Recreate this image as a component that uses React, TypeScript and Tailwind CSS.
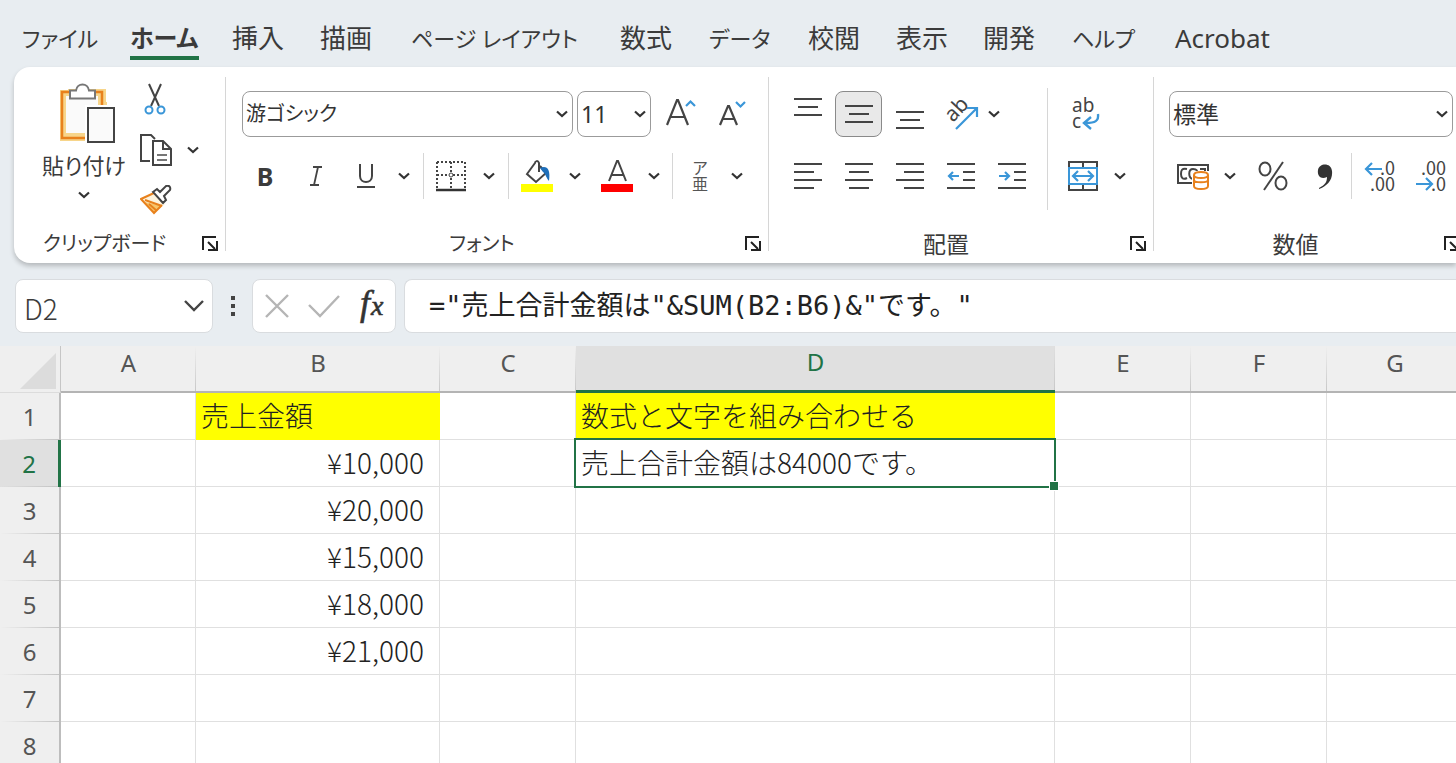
import { useState } from 'react'
import type { ReactNode } from 'react'
import clsx from 'clsx'

const UI_FONT = "font-['Noto_Sans','Noto_Sans_CJK_JP',sans-serif]"
const CELL_FONT = "font-['Noto_Sans_CJK_JP',sans-serif]"
const INK = '#444444'
const BLUE = '#3a96d8'
const ORANGE = '#e8811c'

const TABS = [
  { label: 'ファイル', width: 'w-[108px]', size: 'text-[22px]' },
  { label: 'ホーム', width: 'w-[102px]', size: 'text-[24px]' },
  { label: '挿入', width: 'w-[88px]', size: 'text-[26px]' },
  { label: '描画', width: 'w-[91px]', size: 'text-[26px]' },
  { label: 'ページ レイアウト', width: 'w-[209px]', size: 'text-[22px]' },
  { label: '数式', width: 'w-[89px]', size: 'text-[26px]' },
  { label: 'データ', width: 'w-[99px]', size: 'text-[22px]' },
  { label: '校閲', width: 'w-[88px]', size: 'text-[26px]' },
  { label: '表示', width: 'w-[87px]', size: 'text-[26px]' },
  { label: '開発', width: 'w-[89px]', size: 'text-[26px]' },
  { label: 'ヘルプ', width: 'w-[103px]', size: 'text-[22px]' },
  { label: 'Acrobat', width: 'w-[120px]', size: 'text-[26px]' },
]

const COLUMNS = [
  { name: 'A', width: 'w-[135px]' },
  { name: 'B', width: 'w-[244px]' },
  { name: 'C', width: 'w-[136px]' },
  { name: 'D', width: 'w-[479px]' },
  { name: 'E', width: 'w-[136px]' },
  { name: 'F', width: 'w-[136px]' },
  { name: 'G', width: 'w-[136px]' },
]

const ROWS = [1, 2, 3, 4, 5, 6, 7, 8]

const CELLS: Record<string, string> = {
  B1: '売上金額',
  B2: '¥10,000',
  B3: '¥20,000',
  B4: '¥15,000',
  B5: '¥18,000',
  B6: '¥21,000',
  D1: '数式と文字を組み合わせる',
  D2: '売上合計金額は84000です。',
}

const Chevron = () => (
  <svg width="12" height="8" viewBox="0 0 12 8" fill="none" stroke="#333" strokeWidth="2.2">
    <path d="M1 1.500l5 4.500 5-4.500" />
  </svg>
)

type LinesProps = { rows: [number, number][]; height?: number; children?: ReactNode }
const Lines = ({ rows, height = 28, children }: LinesProps) => (
  <svg width="28" height={height} viewBox={`0 0 28 ${height}`} fill="none">
    {rows.map(([from, to], i) => (
      <path key={i} d={`M${from} ${2 + i * 8}H${to}`} stroke={INK} strokeWidth="2" />
    ))}
    {children}
  </svg>
)

type BtnProps = {
  label: string
  className?: string
  pressed?: boolean
  children: ReactNode
}
const Btn = ({ label, className, pressed, children }: BtnProps) => (
  <button
    type="button"
    aria-label={label}
    aria-pressed={pressed}
    className={clsx('flex shrink-0 items-center justify-center', className ?? 'h-[46px] w-[51px]')}
  >
    {children}
  </button>
)

const More = ({ label, className }: { label: string; className: string }) => (
  <Btn label={label} className={clsx('h-[46px]', className)}>
    <Chevron />
  </Btn>
)

const Rule = ({ className }: { className?: string }) => (
  <div className={clsx('w-px shrink-0 bg-[#d6d6d6]', className)} />
)

type PickerProps = { label: string; value: string; className: string }
const Picker = ({ label, value, className }: PickerProps) => (
  <div className={clsx('relative h-[46px] shrink-0', className)}>
    <select
      aria-label={label}
      defaultValue={value}
      className="h-full w-full appearance-none rounded-lg border border-[#9b9b9b] bg-white pl-[3px] leading-8 text-[#333] [font-feature-settings:'palt']"
    >
      <option>{value}</option>
    </select>
    <span className="pointer-events-none absolute inset-y-0 right-[5px] flex items-center">
      <Chevron />
    </span>
  </div>
)

type GroupProps = { title: string; size: string; className: string; children: ReactNode }
const Group = ({ title, size, className, children }: GroupProps) => (
  <section className={clsx('flex shrink-0 flex-col', className)}>
    <div className="grow">{children}</div>
    <div className="mb-[5px] flex h-7 items-center">
      <h2 className={clsx("flex-1 text-center leading-7 [font-feature-settings:'palt']", size)}>
        {title}
      </h2>
      <Btn label={`${title}の設定`} className="h-7 w-[30px]">
        <svg width="16" height="16" viewBox="0 0 16 16" fill="none" stroke="#222" strokeWidth="2">
          <path d="M1 14V1h13M6 6l7 7M15 5v9H6" />
        </svg>
      </Btn>
    </div>
  </section>
)

const Clipboard = () => (
  <Group title="クリップボード" size="text-[20px]" className="w-[211px]">
    <div className="flex pt-4 pl-[26px]">
      <button
        type="button"
        className="flex w-[88px] flex-col items-center text-[22px] leading-8 whitespace-nowrap [font-feature-settings:'palt']"
      >
        <svg width="56" height="62" viewBox="0 0 56 62" fill="none" className="mb-1 ml-2">
          <path d="M3.500 10.500h39v44h-39z" fill="#fff" stroke="#f7d58a" strokeWidth="9" />
          <path d="M2 9h40v46H2z" stroke={ORANGE} strokeWidth="2.500" />
          <path d="M6 13h32v37H6z" fill="#fafafa" />
          <path d="M0 58h26v4H0zM46 5h8v14h-8zM0 4h8v3H0z" fill="#fff" />
          <path
            d="M10 15.500V7.500h6c1-8 12-8 13 0h6v8z"
            fill="#fff"
            stroke="#777"
            strokeWidth="2"
          />
          <path d="M25 22h31v40H25z" fill="#fff" />
          <path d="M28 25h26v34H28z" fill="#fafafa" stroke={INK} strokeWidth="2" />
        </svg>
        貼り付け
        <span className="flex h-7 items-center">
          <Chevron />
        </span>
      </button>
      <div className="flex flex-col pl-1">
        <Btn label="切り取り" className="h-8 w-[46px]">
          <svg width="22" height="32" viewBox="0 0 22 32" fill="none">
            <path d="M5 1l10 22M17 1L7 23" stroke={INK} strokeWidth="2" />
            <circle cx="5" cy="27" r="3.500" stroke={BLUE} strokeWidth="2" />
            <circle cx="17" cy="27" r="3.500" stroke={BLUE} strokeWidth="2" />
          </svg>
        </Btn>
        <div className="flex pt-3">
          <Btn label="コピー" className="h-[46px] w-12">
            <svg width="32" height="32" viewBox="0 0 32 32" fill="none" stroke={INK} strokeWidth="2">
              <path d="M10 27H1V1h10l4 4" />
              <path d="M13 7h10l8 8v16H13z" fill="#fff" />
              <path d="M23 7v8h8" />
              <path d="M17 21h10M17 26h10" stroke="#777" />
            </svg>
          </Btn>
          <More label="コピーのオプション" className="w-[26px]" />
        </div>
        <Btn label="書式のコピー" className="h-[54px] w-12">
          <svg width="32" height="30" viewBox="0 0 32 30" fill="none">
            <path d="M2 14l12-5 11 10-11 10z" fill="#fdf3dd" />
            <path d="M5 17l17 4-8 7z" fill="#f7c66b" />
            <path d="M14 8L1 14l13 14 8-8M5 15l17 6M9 19l8 7" stroke={ORANGE} strokeWidth="2" />
            <path
              d="M13 7l4-3 3 3 6-6c3-1 5 1 4 4l-6 6 2 4-3 3z"
              fill="#fff"
              stroke={INK}
              strokeWidth="2"
            />
          </svg>
        </Btn>
      </div>
    </div>
  </Group>
)

const FontGroup = () => (
  <Group title="フォント" size="text-[20px]" className="w-[542px]">
    <div className="flex gap-1 pt-6 pl-4">
      <Picker label="フォント名" value="游ゴシック" className="w-[331px] text-[20px]" />
      <Picker label="フォント サイズ" value="11" className="w-[74px] text-[23px]" />
      <Btn label="フォント サイズの拡大">
        <svg width="30" height="32" viewBox="0 0 30 32" fill="none">
          <path d="M1 27L11 2h1l10 25M5 19h13" stroke={INK} strokeWidth="2.200" />
          <path d="M20 8l4.500-4.500L29 8" stroke={BLUE} strokeWidth="2.200" />
        </svg>
      </Btn>
      <Btn label="フォント サイズの縮小" className="h-[46px] w-11">
        <svg width="30" height="32" viewBox="0 0 30 32" fill="none">
          <path d="M3 27l8-19h1l8 19M6 21h11" stroke={INK} strokeWidth="2.200" />
          <path d="M19 4l4.500 4.500L28 4" stroke={BLUE} strokeWidth="2.200" />
        </svg>
      </Btn>
    </div>
    <div className="flex pt-4 pl-[14px]">
      <Btn label="太字" className="h-[46px] w-[50px]">
        <span className="text-[25px] leading-8 font-bold">B</span>
      </Btn>
      <Btn label="斜体" className="h-[46px] w-[52px]">
        <svg width="14" height="20" viewBox="0 0 14 20" fill="none" stroke={INK} strokeWidth="1.800">
          <path d="M4 1h9M1 19h9M9 1L5 19" />
        </svg>
      </Btn>
      <Btn label="下線" className="h-[46px] w-12">
        <svg width="18" height="26" viewBox="0 0 18 26" fill="none" stroke={INK} strokeWidth="2">
          <path d="M3 1v12c0 8 12 8 12 0V1M0 24h18" />
        </svg>
      </Btn>
      <More label="下線の種類" className="w-7" />
      <Rule className="ml-[5px] h-[46px]" />
      <Btn label="罫線" className="h-[46px] w-[54px]">
        <svg width="32" height="32" viewBox="0 0 32 32" fill="none">
          <path
            d="M2 2h28M2 2v26M30 2v26M16 2v26M2 15h28"
            stroke={INK}
            strokeWidth="2"
            strokeDasharray="2 2"
          />
          <circle cx="16" cy="15" r="2" fill="#fff" stroke={INK} />
          <path d="M1 30h30" stroke="#333" strokeWidth="2.500" />
        </svg>
      </Btn>
      <More label="罫線の種類" className="w-[22px]" />
      <Rule className="mr-1 ml-2 h-[46px]" />
      <Btn label="塗りつぶしの色" className="h-[46px] w-12">
        <svg width="32" height="32" viewBox="0 0 32 32" fill="none">
          <path d="M18 12V3c-1-3-4-2-4 0L6 14l9 8 10-9-6-7" stroke={INK} strokeWidth="2" />
          <path d="M19 8c6-3 11 0 9 13-3-3-3-7-6-9z" fill="#1e6fba" />
          <path d="M0 24h32v8H0z" fill="#ffff00" />
        </svg>
      </Btn>
      <More label="塗りつぶしの色の選択" className="w-7" />
      <Btn label="フォントの色" className="h-[46px] w-14">
        <svg width="32" height="32" viewBox="0 0 32 32" fill="none">
          <path d="M8 21l8-20h1l8 20M11 15h11" stroke={INK} strokeWidth="2" />
          <path d="M0 24h32v8H0z" fill="#ff0000" />
        </svg>
      </Btn>
      <More label="フォントの色の選択" className="w-[18px]" />
      <Rule className="ml-[9px] h-[46px]" />
      <Btn label="ふりがな" className="h-[46px] w-[54px] flex-col text-base leading-4 text-[#555]">
        <span>ア</span>
        <span>亜</span>
      </Btn>
      <More label="ふりがなのオプション" className="w-5" />
    </div>
  </Group>
)

const ARROW_LEFT = 'M12 14H2M6 10l-4 4 4 4'
const ARROW_RIGHT = 'M1 14h10M7 10l4 4-4 4'

const Alignment = () => (
  <Group title="配置" size="text-[23px]" className="w-[384px]">
    <div className="flex pl-[13px]">
      <div className="flex flex-col gap-4 pt-6">
        <div className="flex">
          <Btn label="上揃え" className="h-8 w-[51px]">
            <Lines height={20} rows={[[0, 28], [4, 24], [0, 28]]} />
          </Btn>
          <Btn
            label="上下中央揃え"
            pressed
            className="mx-[2px] h-[46px] w-[47px] rounded-lg border border-[#8a8a8a] bg-[#e9e9e9]"
          >
            <Lines height={20} rows={[[0, 28], [4, 24], [0, 28]]} />
          </Btn>
          <Btn label="下揃え" className="-mb-4 h-[58px] w-[51px]">
            <Lines height={20} rows={[[0, 28], [4, 24], [0, 28]]} />
          </Btn>
          <Btn label="方向">
            <svg width="34" height="34" viewBox="0 0 34 34" fill="none" className="overflow-visible">
              <text
                x="9"
                y="26"
                fontSize="21"
                fill={INK}
                transform="rotate(-47 9 26)"
                fontFamily="Noto Sans"
              >
                ab
              </text>
              <path d="M12 32l20-20M23 11h10v9" stroke={BLUE} strokeWidth="2.200" />
            </svg>
          </Btn>
          <More label="方向のオプション" className="w-4" />
        </div>
        <div className="flex">
          <Btn label="左揃え">
            <Lines rows={[[0, 28], [0, 20], [0, 28], [0, 20]]} />
          </Btn>
          <Btn label="中央揃え">
            <Lines rows={[[0, 28], [4, 24], [0, 28], [4, 24]]} />
          </Btn>
          <Btn label="右揃え">
            <Lines rows={[[0, 28], [8, 28], [0, 28], [8, 28]]} />
          </Btn>
          <Btn label="インデントを減らす">
            <Lines rows={[[0, 28], [16, 28], [16, 28], [0, 28]]}>
              <path d={ARROW_LEFT} stroke={BLUE} strokeWidth="2.200" />
            </Lines>
          </Btn>
          <Btn label="インデントを増やす">
            <Lines rows={[[0, 28], [16, 28], [16, 28], [0, 28]]}>
              <path d={ARROW_RIGHT} stroke={BLUE} strokeWidth="2.200" />
            </Lines>
          </Btn>
        </div>
      </div>
      <Rule className="mt-[21px] ml-[10px] h-[122px]" />
      <div className="flex flex-col gap-4 pt-6 pl-[11px]">
        <Btn label="折り返して全体を表示する">
          <svg width="30" height="34" viewBox="0 0 30 34" fill="none" className="overflow-visible">
            <text x="2" y="15" fontSize="19" fill={INK} fontFamily="Noto Sans">
              <tspan>ab</tspan>
              <tspan x="2" y="31">
                c
              </tspan>
            </text>
            <path d="M28 17c1 7-3 9-12 9M21 20l-7 6 7 6" stroke={BLUE} strokeWidth="2.400" />
          </svg>
        </Btn>
        <div className="flex">
          <Btn label="セルを結合して中央揃え" className="h-[46px] w-[47px]">
            <svg width="32" height="32" viewBox="0 0 32 32" fill="none" stroke={INK}>
              <path d="M2 2h28v28H2zM16 2v6M16 24v6" strokeWidth="2" />
              <path d="M2 8h28v16H2z" fill="#fff" stroke={BLUE} strokeWidth="2" />
              <path
                d="M6 16h20M11 11l-5 5 5 5M21 11l5 5-5 5"
                stroke={BLUE}
                strokeWidth="2.200"
              />
            </svg>
          </Btn>
          <More label="結合のオプション" className="w-7" />
        </div>
      </div>
    </div>
  </Group>
)

type DecimalProps = { arrow: string; top: string; bottom: string }
const Decimal = ({ arrow, top, bottom }: DecimalProps) => (
  <svg width="32" height="34" viewBox="0 0 32 34" fill="none" className="overflow-visible">
    <path d={arrow} stroke={BLUE} strokeWidth="2.200" />
    <text fontSize="18" fill={INK} textAnchor="end" fontFamily="Noto Sans CJK JP">
      <tspan x="31" y="16">
        {top}
      </tspan>
      <tspan x="31" y="32">
        {bottom}
      </tspan>
    </text>
  </svg>
)

const NumberGroup = () => (
  <Group title="数値" size="text-[23px]" className="w-[313px]">
    <div className="flex pt-6 pl-[15px]">
      <Picker label="表示形式" value="標準" className="w-[284px] text-[23px]" />
    </div>
    <div className="flex pt-4 pl-[14px]">
      <Btn label="通貨表示形式" className="h-[46px] w-[49px]">
        <svg width="32" height="28" viewBox="0 0 32 28" fill="none">
          <path d="M1 3h30v18H1z" stroke={INK} strokeWidth="2" />
          <path
            d="M10 7c-5-1-6 1-6 5s2 6 6 4M16 17c-5-1-5-10 0-10s4 3 4 5M23 7h5v5"
            stroke={INK}
            strokeWidth="2"
          />
          <path d="M15 9h17v19H15z" fill="#fff" />
          <path
            d="M17 13v11c0 4 14 4 14 0V13M17 18c0 3 14 3 14 0M17 13c0 4 14 4 14 0s-14-4-14 0z"
            stroke={ORANGE}
            strokeWidth="2"
          />
        </svg>
      </Btn>
      <More label="通貨の選択" className="w-[26px]" />
      <Btn label="パーセント スタイル" className="h-[46px] w-[60px]">
        <svg width="30" height="30" viewBox="0 0 30 30" fill="none" stroke={INK} strokeWidth="2">
          <path d="M25 1L6 29" />
          <ellipse cx="7" cy="8" rx="5.500" ry="6.500" />
          <ellipse cx="23" cy="22" rx="5.500" ry="6.500" />
        </svg>
      </Btn>
      <Btn label="桁区切りスタイル" className="h-[46px] w-[44px]">
        <svg width="16" height="26" viewBox="0 0 16 26" fill="#333">
          <path d="M2 25c6-3 8-6 8-11-6 3-10-1-9-7C2 0 14-1 15 8c1 9-5 15-13 18z" />
        </svg>
      </Btn>
      <Rule className="ml-1 h-[46px]" />
      <Btn label="小数点以下の表示桁数を増やす" className="h-[46px] w-14">
        <Decimal arrow="M18 10H2M8 4l-6 6 6 6" top=".0" bottom=".00" />
      </Btn>
      <Btn label="小数点以下の表示桁数を減らす" className="h-[46px] w-[45px]">
        <Decimal arrow="M1 25h16M11 19l6 6-6 6" top=".00" bottom=".0" />
      </Btn>
    </div>
  </Group>
)

const FormulaBar = () => {
  const [formula, setFormula] = useState('="売上合計金額は"&SUM(B2:B6)&"です。"')

  return (
    <div className="flex h-[54px] shrink-0 pl-[15px]">
      <div className="flex w-[198px] shrink-0 items-center rounded-lg border border-[#d9dcdf] bg-white pr-2 pl-2">
        <input
          aria-label="名前ボックス"
          defaultValue="D2"
          className={clsx('h-full w-0 flex-1 pt-1 text-[28px] font-light', CELL_FONT)}
        />
        <Btn label="名前の一覧" className="h-8 w-5">
          <svg width="20" height="12" viewBox="0 0 20 12" fill="none" stroke={INK} strokeWidth="2.400">
            <path d="M1 1l9 9 9-9" />
          </svg>
        </Btn>
      </div>
      <svg width="39" height="54" viewBox="0 0 39 54" fill="#444" className="shrink-0">
        <path d="M18 17h4v4h-4zM18 25h4v4h-4zM18 33h4v4h-4z" />
      </svg>
      <div className="flex w-[144px] shrink-0 items-center rounded-lg border border-[#d9dcdf] bg-white">
        <Btn label="キャンセル" className="h-full w-12">
          <svg width="24" height="24" viewBox="0 0 24 24" stroke="#b5b5b5" strokeWidth="2.400">
            <path d="M1 1l22 22M23 1L1 23" />
          </svg>
        </Btn>
        <Btn label="入力" className="h-full w-[46px]">
          <svg width="32" height="24" viewBox="0 0 32 24" fill="none" stroke="#b5b5b5" strokeWidth="2.400">
            <path d="M1 11l11 11L31 2" />
          </svg>
        </Btn>
        <Btn label="関数の挿入" className="h-full w-[48px]">
          <svg width="32" height="36" viewBox="0 0 32 36" fill="#333" className="overflow-visible">
            <text
              y="27"
              fontFamily="Liberation Serif"
              fontStyle="italic"
              stroke="#333"
              strokeWidth="0.600"
            >
              <tspan x="5" fontSize="36">
                f
              </tspan>
              <tspan x="16" fontSize="28">
                x
              </tspan>
            </text>
          </svg>
        </Btn>
      </div>
      <input
        aria-label="数式バー"
        value={formula}
        onChange={(e) => setFormula(e.target.value)}
        className="ml-2 w-0 flex-1 rounded-l-lg border border-r-0 border-[#d9dcdf] bg-white pl-6 font-['DejaVu_Sans_Mono','Noto_Sans_CJK_JP',monospace] text-[27px] text-[#222]"
      />
    </div>
  )
}

const Sheet = () => (
  <div className="mt-[13px] min-h-0 flex-1 overflow-hidden bg-white">
    <table className="w-[1463px] table-fixed border-separate border-spacing-0">
      <colgroup>
        <col className="w-[61px]" />
        {COLUMNS.map(({ name, width }) => (
          <col key={name} className={width} />
        ))}
      </colgroup>
      <thead>
        <tr className={clsx('h-[47px] text-2xl text-[#555]', UI_FONT)}>
          <th
            aria-label="すべて選択"
            className="border-r border-b border-r-[#c6c6c6] border-b-[#dcdcdc] bg-[#efefef] p-0"
          >
            <svg width="36" height="36" viewBox="0 0 36 36" fill="#dcdcdc" className="mt-1 ml-5">
              <path d="M36 0v36H0z" />
            </svg>
          </th>
          {COLUMNS.map(({ name }) => (
            <th
              key={name}
              scope="col"
              className={clsx(
                'relative p-0 pb-3 align-middle leading-7 font-normal',
                name === 'D'
                  ? 'border-b-3 border-[#217346] bg-[#e0e0e0] text-[#217346]'
                  : 'border-b-2 border-[#b4b4b4] bg-[#efefef]'
              )}
            >
              {name}
              <span className="absolute inset-y-0 right-0 w-px bg-linear-to-b from-transparent to-[#c8c8c8]" />
            </th>
          ))}
        </tr>
      </thead>
      <tbody>
        {ROWS.map((row) => (
          <tr key={row} className="h-[47px]">
            <th
              scope="row"
              className={clsx(
                'relative p-0 text-2xl leading-7 font-normal',
                UI_FONT,
                row === 2
                  ? 'border-r-3 border-[#217346] bg-[#e0e0e0] text-[#217346]'
                  : 'border-r-2 border-[#bdbdbd] bg-[#efefef] text-[#555]'
              )}
            >
              {row}
              <span className="absolute inset-x-0 bottom-0 h-px bg-linear-to-r from-transparent to-[#c4c4c4]" />
            </th>
            {COLUMNS.map(({ name }) => {
              const id = `${name}${row}`
              const heading = row === 1 && id in CELLS

              return (
                <td
                  key={id}
                  className={clsx(
                    'border-r border-b p-0 pb-[2px] text-[28px] leading-9 font-light whitespace-nowrap text-[#222]',
                    CELL_FONT,
                    id === 'D2' && 'relative z-10',
                    heading ? 'border-[#ffff00] bg-[#ffff00]' : 'border-[#e0e0e0]',
                    name === 'B' && !heading ? 'pr-[15px] text-right' : 'pl-[5px]'
                  )}
                >
                  {CELLS[id]}
                  {id === 'D2' && (
                    <span className="pointer-events-none absolute -inset-x-[2px] -inset-y-[2px] border-2 border-[#217346]">
                      <span className="absolute -right-[5px] -bottom-[5px] h-[10px] w-[10px] border border-white bg-[#217346]" />
                    </span>
                  )}
                </td>
              )
            })}
          </tr>
        ))}
      </tbody>
    </table>
  </div>
)

const App = () => {
  const [active, setActive] = useState('ホーム')

  return (
    <main
      lang="ja"
      className={clsx('flex h-screen flex-col overflow-hidden bg-[#e8edf1] text-[#3b3b3b]', UI_FONT)}
    >
      <nav className="flex h-[67px] shrink-0 items-start pt-5 pl-[22px]">
        {TABS.map(({ label, width, size }) => (
          <div key={label} className={clsx('shrink-0', width)}>
            <button
              type="button"
              onClick={() => setActive(label)}
              className={clsx(
                "h-10 border-b-4 leading-9 whitespace-nowrap [font-feature-settings:'palt']",
                size,
                label === active ? 'border-[#217346] font-bold' : 'border-transparent'
              )}
            >
              {label}
            </button>
          </div>
        ))}
      </nav>

      <div className="ml-[14px] flex h-[196px] shrink-0 rounded-l-2xl bg-white shadow-[0_3px_5px_rgba(0,0,0,0.22)]">
        <Clipboard />
        <Rule className="mt-[10px] h-[174px]" />
        <FontGroup />
        <Rule className="mt-[10px] h-[174px]" />
        <Alignment />
        <Rule className="mt-[10px] h-[174px]" />
        <NumberGroup />
      </div>

      <div className="h-4 shrink-0" />
      <FormulaBar />
      <Sheet />
    </main>
  )
}

export default App
